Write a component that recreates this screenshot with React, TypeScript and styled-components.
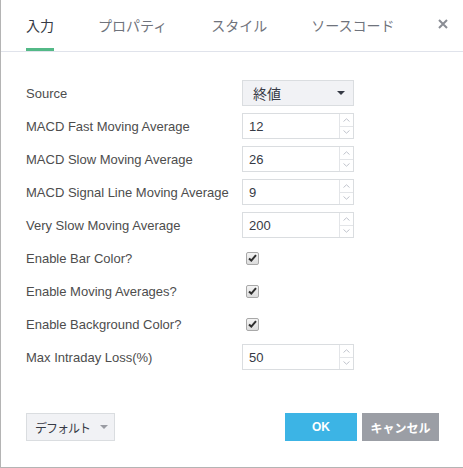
import React from 'react';
import styled, { createGlobalStyle } from 'styled-components';

const GlobalStyle = createGlobalStyle`
    html, body {
        margin: 0;
        padding: 0;
        background: #ffffff;
    }
    body {
        font-family: 'Liberation Sans', 'Noto Sans CJK JP', sans-serif;
    }
`;

const Dialog = styled.div`
    width: 463px;
    height: 468px;
    box-sizing: border-box;
    border-left: 1px solid #b4b4b4;
    border-bottom: 1px solid #b4b4b4;
    background: #fff;
    display: flex;
    flex-direction: column;
    color: #4a4a4a;
`;

const Header = styled.div`
    display: flex;
    align-items: stretch;
    height: 52px;
    box-sizing: border-box;
    border-bottom: 1px solid #e0e3eb;
    padding-left: 25px;
    padding-right: 20px;
`;

const Tab = styled.div<{ $active?: boolean }>`
    position: relative;
    display: flex;
    align-items: center;
    margin-right: 44px;
    padding-bottom: 2px;
    font-size: 14px;
    white-space: nowrap;
    font-family: 'Noto Sans CJK JP', sans-serif;
    color: ${({ $active }) => ($active ? '#363a45' : '#6f737c')};

    &::after {
        content: '';
        display: ${({ $active }) => ($active ? 'block' : 'none')};
        position: absolute;
        left: 0;
        right: 0;
        bottom: 0;
        height: 3px;
        background: #53b987;
    }
`;

const Close = styled.div`
    margin-left: auto;
    display: flex;
    align-items: center;
    padding-bottom: 4px;
`;

const Body = styled.div`
    flex: 1;
    padding: 28px 0 0 25px;
    display: flex;
    flex-direction: column;
    gap: 7px;
`;

const Row = styled.div`
    display: grid;
    grid-template-columns: 216px 112px;
    align-items: center;
    height: 26px;
`;

const Label = styled.div`
    font-size: 13px;
    color: #4d4d4d;
    white-space: nowrap;
`;

const Select = styled.div`
    height: 26px;
    box-sizing: border-box;
    border: 1px solid #dadde0;
    background: #f1f2f5;
    display: flex;
    align-items: center;
    justify-content: space-between;
    padding: 0 8px 0 10px;
    font-size: 14px;
    font-family: 'Noto Sans CJK JP', sans-serif;
    color: #363a45;
`;

const Caret = styled.span<{ $color?: string }>`
    width: 0;
    height: 0;
    border-left: 4px solid transparent;
    border-right: 4px solid transparent;
    border-top: 4px solid ${({ $color }) => $color || '#363a45'};
`;

const NumberBox = styled.div`
    height: 26px;
    box-sizing: border-box;
    border: 1px solid #dadde0;
    display: flex;
    align-items: stretch;
    background: #fff;
`;

const NumberValue = styled.div`
    flex: 1;
    display: flex;
    align-items: center;
    padding-left: 6px;
    font-size: 13px;
    color: #363a45;
`;

const Spinner = styled.div`
    width: 13px;
    border-left: 1px solid #e3e5e8;
    display: flex;
    flex-direction: column;
`;

const SpinHalf = styled.div<{ $top?: boolean }>`
    flex: 1;
    display: flex;
    align-items: center;
    justify-content: center;
    border-bottom: ${({ $top }) => ($top ? '1px solid #e3e5e8' : 'none')};
`;

const CheckWrap = styled.div`
    padding-left: 4px;
    display: flex;
    align-items: center;
`;

const CheckBox = styled.div`
    width: 11px;
    height: 11px;
    border: 1px solid #a8a8a8;
    border-radius: 2px;
    background: linear-gradient(#f4f4f4, #dcdcdc);
    display: flex;
    align-items: center;
    justify-content: center;
`;

const Footer = styled.div`
    display: flex;
    align-items: center;
    padding: 0 24px 26px 25px;
    gap: 5px;
`;

const DefaultButton = styled.div`
    width: 89px;
    height: 28px;
    box-sizing: border-box;
    border: 1px solid #dadde0;
    background: #f1f2f5;
    display: flex;
    align-items: center;
    justify-content: center;
    gap: 10px;
    padding-left: 2px;
    font-size: 12px;
    letter-spacing: -1px;
    font-family: 'Noto Sans CJK JP', sans-serif;
    color: #363a45;
    margin-right: auto;
`;

const ActionButton = styled.div<{ $bg: string; $width: number }>`
    width: ${({ $width }) => $width}px;
    height: 28px;
    background: ${({ $bg }) => $bg};
    color: #fff;
    font-weight: bold;
    font-size: 12px;
    font-family: 'Liberation Sans', 'Noto Sans CJK JP', sans-serif;
    display: flex;
    align-items: center;
    justify-content: center;
`;

const Spin = () => (
    <Spinner>
        <SpinHalf $top>
            <svg width='7' height='4' viewBox='0 0 7 4'>
                <path d='M0.5 3.5 L3.5 0.8 L6.5 3.5' fill='none' stroke='#b9bdc6' strokeWidth='0.9' />
            </svg>
        </SpinHalf>
        <SpinHalf>
            <svg width='7' height='4' viewBox='0 0 7 4'>
                <path d='M0.5 0.5 L3.5 3.2 L6.5 0.5' fill='none' stroke='#b9bdc6' strokeWidth='0.9' />
            </svg>
        </SpinHalf>
    </Spinner>
);

const NumberInput = ({ value }: { value: string }) => (
    <NumberBox>
        <NumberValue>{value}</NumberValue>
        <Spin />
    </NumberBox>
);

const Check = () => (
    <CheckWrap>
        <CheckBox>
            <svg width='9' height='8' viewBox='0 0 9 8'>
                <path d='M1 4.5 L3.3 6.6 L8 1.2' fill='none' stroke='#2f2f2f' strokeWidth='2' />
            </svg>
        </CheckBox>
    </CheckWrap>
);

const numberRows = [
    ['MACD Fast Moving Average', '12'],
    ['MACD Slow Moving Average', '26'],
    ['MACD Signal Line Moving Average', '9'],
    ['Very Slow Moving Average', '200'],
];

const checkRows = ['Enable Bar Color?', 'Enable Moving Averages?', 'Enable Background Color?'];

export default function App() {
    return (
        <>
            <GlobalStyle />
            <Dialog>
                <Header>
                    <Tab $active>入力</Tab>
                    <Tab>プロパティ</Tab>
                    <Tab>スタイル</Tab>
                    <Tab>ソースコード</Tab>
                    <Close>
                        <svg width='10' height='10' viewBox='0 0 10 10'>
                            <path d='M1 1 L9 9 M9 1 L1 9' stroke='#8a8d94' strokeWidth='2' />
                        </svg>
                    </Close>
                </Header>
                <Body>
                    <Row>
                        <Label>Source</Label>
                        <Select>
                            終値
                            <Caret />
                        </Select>
                    </Row>
                    {numberRows.map(([label, value]) => (
                        <Row key={label}>
                            <Label>{label}</Label>
                            <NumberInput value={value} />
                        </Row>
                    ))}
                    {checkRows.map((label) => (
                        <Row key={label}>
                            <Label>{label}</Label>
                            <Check />
                        </Row>
                    ))}
                    <Row>
                        <Label>Max Intraday Loss(%)</Label>
                        <NumberInput value='50' />
                    </Row>
                </Body>
                <Footer>
                    <DefaultButton>
                        デフォルト
                        <Caret $color='#9a9ca3' />
                    </DefaultButton>
                    <ActionButton $bg='#3cb4e5' $width={72}>
                        OK
                    </ActionButton>
                    <ActionButton $bg='#9b9ea5' $width={77}>
                        キャンセル
                    </ActionButton>
                </Footer>
            </Dialog>
        </>
    );
}
